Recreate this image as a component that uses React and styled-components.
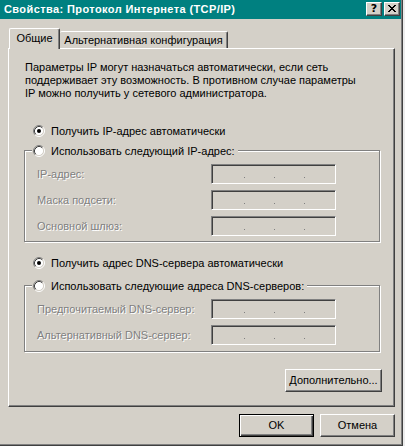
import React from 'react';
import styled, { createGlobalStyle } from 'styled-components';

const GlobalStyle = createGlobalStyle`
    html, body {
        margin: 0;
        padding: 0;
        background: #ececec;
    }
    body {
        font-family: "Liberation Sans", Arial, sans-serif;
        font-size: 11px;
        color: #000;
    }
`;

const Window = styled('div')`
    width: 403px;
    height: 446px;
    box-sizing: border-box;
    background: #d4d0c8;
    border-right: 1px solid #404040;
    border-bottom: 1px solid #404040;
    box-shadow: inset -1px -1px 0 #808080;
    display: flex;
    flex-direction: column;
`;

const TitleBar = styled('div')`
    height: 19px;
    margin-right: 1px;
    background: #008080;
    display: flex;
    align-items: center;
    padding: 0 1px 1px 4px;
    box-sizing: border-box;
    color: #fff;
    font-weight: bold;
    font-size: 11px;
`;

const Title = styled('span')`
    flex: 1;
    white-space: nowrap;
    letter-spacing: 0.4px;
`;

const CaptionButtons = styled('div')`
    display: flex;
    gap: 2px;
`;

const CaptionButton = styled('div')`
    width: 16px;
    height: 14px;
    box-sizing: border-box;
    background: #d4d0c8;
    border: 1px solid;
    border-color: #fff #404040 #404040 #fff;
    box-shadow: inset -1px -1px 0 #808080;
    display: flex;
    align-items: center;
    justify-content: center;
    color: #000;
    font-family: "DejaVu Sans", sans-serif;
    font-size: 11px;
    font-weight: bold;
    line-height: 1;
    padding-bottom: 1px;
`;

const Body = styled('div')`
    flex: 1;
    display: flex;
    flex-direction: column;
    padding: 9px 7px 0 8px;
`;

const TabStrip = styled('div')`
    height: 20px;
    display: flex;
    align-items: flex-end;
    padding-left: 1px;
`;

const Tab = styled('div')`
    position: relative;
    z-index: 1;
    box-sizing: border-box;
    height: ${p => (p.$active ? '21px' : '17px')};
    margin-bottom: ${p => (p.$active ? '-1px' : '0')};
    width: ${p => p.$width}px;
    background: #d4d0c8;
    border-top: 1px solid #fff;
    border-left: ${p => (p.$active ? '1px solid #fff' : 'none')};
    border-right: 1px solid #404040;
    border-radius: 2px 2px 0 0;
    box-shadow: inset -1px 0 0 #808080;
    display: flex;
    align-items: center;
    justify-content: center;
    padding-bottom: ${p => (p.$active ? '3px' : '0')};
    white-space: nowrap;
`;

const Panel = styled('div')`
    width: 387px;
    height: 359px;
    box-sizing: border-box;
    border: 1px solid;
    border-color: #fff #404040 #404040 #fff;
    box-shadow: inset -1px -1px 0 #808080;
    padding: 12px 14px 0 16px;
    display: flex;
    flex-direction: column;
`;

const Description = styled('p')`
    margin: 0;
    line-height: 13px;
`;

const RadioRow = styled('label')`
    display: flex;
    align-items: center;
    gap: 6px;
    height: 13px;
    margin-top: ${p => p.$top || 0}px;
    margin-left: ${p => (p.$inLegend ? 0 : 8)}px;
    white-space: nowrap;
`;

const Group = styled('fieldset')`
    margin: ${p => p.$top}px 0 0 -1px;
    padding: 7px 0 ${p => p.$bottom}px 12px;
    border: 1px solid #808080;
    box-shadow: inset 1px 1px 0 #fff, 1px 1px 0 #fff;
    min-width: 0;
`;

const Legend = styled('legend')`
    padding: 0 3px 0 1px;
    margin-left: -5px;
    background: #d4d0c8;
`;

const Fields = styled('div')`
    display: grid;
    grid-template-columns: 174px 125px;
    row-gap: 6px;
    align-items: center;
`;

const DisabledLabel = styled('span')`
    color: #808080;
    text-shadow: 1px 1px 0 #fff;
    white-space: nowrap;
`;

const IpBox = styled('div')`
    height: 20px;
    box-sizing: border-box;
    border: 1px solid;
    border-color: #808080 #fff #fff #808080;
    box-shadow: inset 1px 1px 0 #404040, inset -1px -1px 0 #d4d0c8;
    display: flex;
    align-items: flex-end;
    gap: 29px;
    padding: 0 0 5px 32px;
`;

const Dot = styled('span')`
    width: 1px;
    height: 1px;
    background: #808080;
`;

const Button = styled('div')`
    width: ${p => p.$width}px;
    height: 23px;
    box-sizing: border-box;
    background: #d4d0c8;
    border: 1px solid;
    border-color: ${p => (p.$default ? '#000' : '#fff #404040 #404040 #fff')};
    box-shadow: ${p => (p.$default
        ? 'inset 1px 1px 0 #fff, inset -1px -1px 0 #404040, inset -2px -2px 0 #808080'
        : 'inset -1px -1px 0 #808080')};
    display: flex;
    align-items: center;
    justify-content: center;
    padding-bottom: 1px;
    white-space: nowrap;
`;

const AdvancedButton = styled(Button)`
    align-self: flex-end;
    margin: 17px -2px 0 0;
`;

const Footer = styled('div')`
    display: flex;
    justify-content: flex-end;
    gap: 6px;
    margin-top: 7px;
`;

const RadioMark = ({ checked }) => (
    <svg width="12" height="12" viewBox="0 0 12 12">
        <circle cx="6" cy="6" r="4.5" fill="#fff" />
        <path d="M2.11 9.89 A5.5 5.5 0 0 1 9.89 2.11" stroke="#808080" fill="none" />
        <path d="M9.89 2.11 A5.5 5.5 0 0 1 2.11 9.89" stroke="#fff" fill="none" />
        <path d="M2.82 9.18 A4.5 4.5 0 0 1 9.18 2.82" stroke="#404040" fill="none" />
        <path d="M9.18 2.82 A4.5 4.5 0 0 1 2.82 9.18" stroke="#d4d0c8" fill="none" />
        {checked && <circle cx="6" cy="6" r="2" fill="#000" />}
    </svg>
);

const CloseGlyph = () => (
    <svg width="8" height="7" viewBox="0 0 8 7" shapeRendering="crispEdges">
        <path
            fill="#000"
            d="M0 0h2v1H0zM6 0h2v1H6zM1 1h2v1H1zM5 1h2v1H5zM2 2h4v1H2zM3 3h2v1H3zM2 4h4v1H2zM1 5h2v1H1zM5 5h2v1H5zM0 6h2v1H0zM6 6h2v1H6z"
        />
    </svg>
);

const IpField = () => (
    <IpBox>
        <Dot />
        <Dot />
        <Dot />
    </IpBox>
);

const App = () => {
    return (
        <>
            <GlobalStyle />
            <Window>
                <TitleBar>
                    <Title>Свойства: Протокол Интернета (TCP/IP)</Title>
                    <CaptionButtons>
                        <CaptionButton>?</CaptionButton>
                        <CaptionButton><CloseGlyph /></CaptionButton>
                    </CaptionButtons>
                </TitleBar>
                <Body>
                    <TabStrip>
                        <Tab $active $width={51}>Общие</Tab>
                        <Tab $width={168}>Альтернативная конфигурация</Tab>
                    </TabStrip>
                    <Panel>
                        <Description>
                            Параметры IP могут назначаться автоматически, если сеть<br />
                            поддерживает эту возможность. В противном случае параметры<br />
                            IP можно получить у сетевого администратора.
                        </Description>

                        <RadioRow $top={24}>
                            <RadioMark checked />
                            Получить IP-адрес автоматически
                        </RadioRow>

                        <Group $top={7} $bottom={5}>
                            <Legend>
                                <RadioRow $inLegend>
                                    <RadioMark />
                                    Использовать следующий IP-адрес:
                                </RadioRow>
                            </Legend>
                            <Fields>
                                <DisabledLabel>IP-адрес:</DisabledLabel>
                                <IpField />
                                <DisabledLabel>Маска подсети:</DisabledLabel>
                                <IpField />
                                <DisabledLabel>Основной шлюз:</DisabledLabel>
                                <IpField />
                            </Fields>
                        </Group>

                        <RadioRow $top={14}>
                            <RadioMark checked />
                            Получить адрес DNS-сервера автоматически
                        </RadioRow>

                        <Group $top={10} $bottom={6}>
                            <Legend>
                                <RadioRow $inLegend>
                                    <RadioMark />
                                    Использовать следующие адреса DNS-серверов:
                                </RadioRow>
                            </Legend>
                            <Fields>
                                <DisabledLabel>Предпочитаемый DNS-сервер:</DisabledLabel>
                                <IpField />
                                <DisabledLabel>Альтернативный DNS-сервер:</DisabledLabel>
                                <IpField />
                            </Fields>
                        </Group>

                        <AdvancedButton $width={97}>Дополнительно...</AdvancedButton>
                    </Panel>
                    <Footer>
                        <Button $default $width={75}>OK</Button>
                        <Button $width={75}>Отмена</Button>
                    </Footer>
                </Body>
            </Window>
        </>
    );
};

export default App;
